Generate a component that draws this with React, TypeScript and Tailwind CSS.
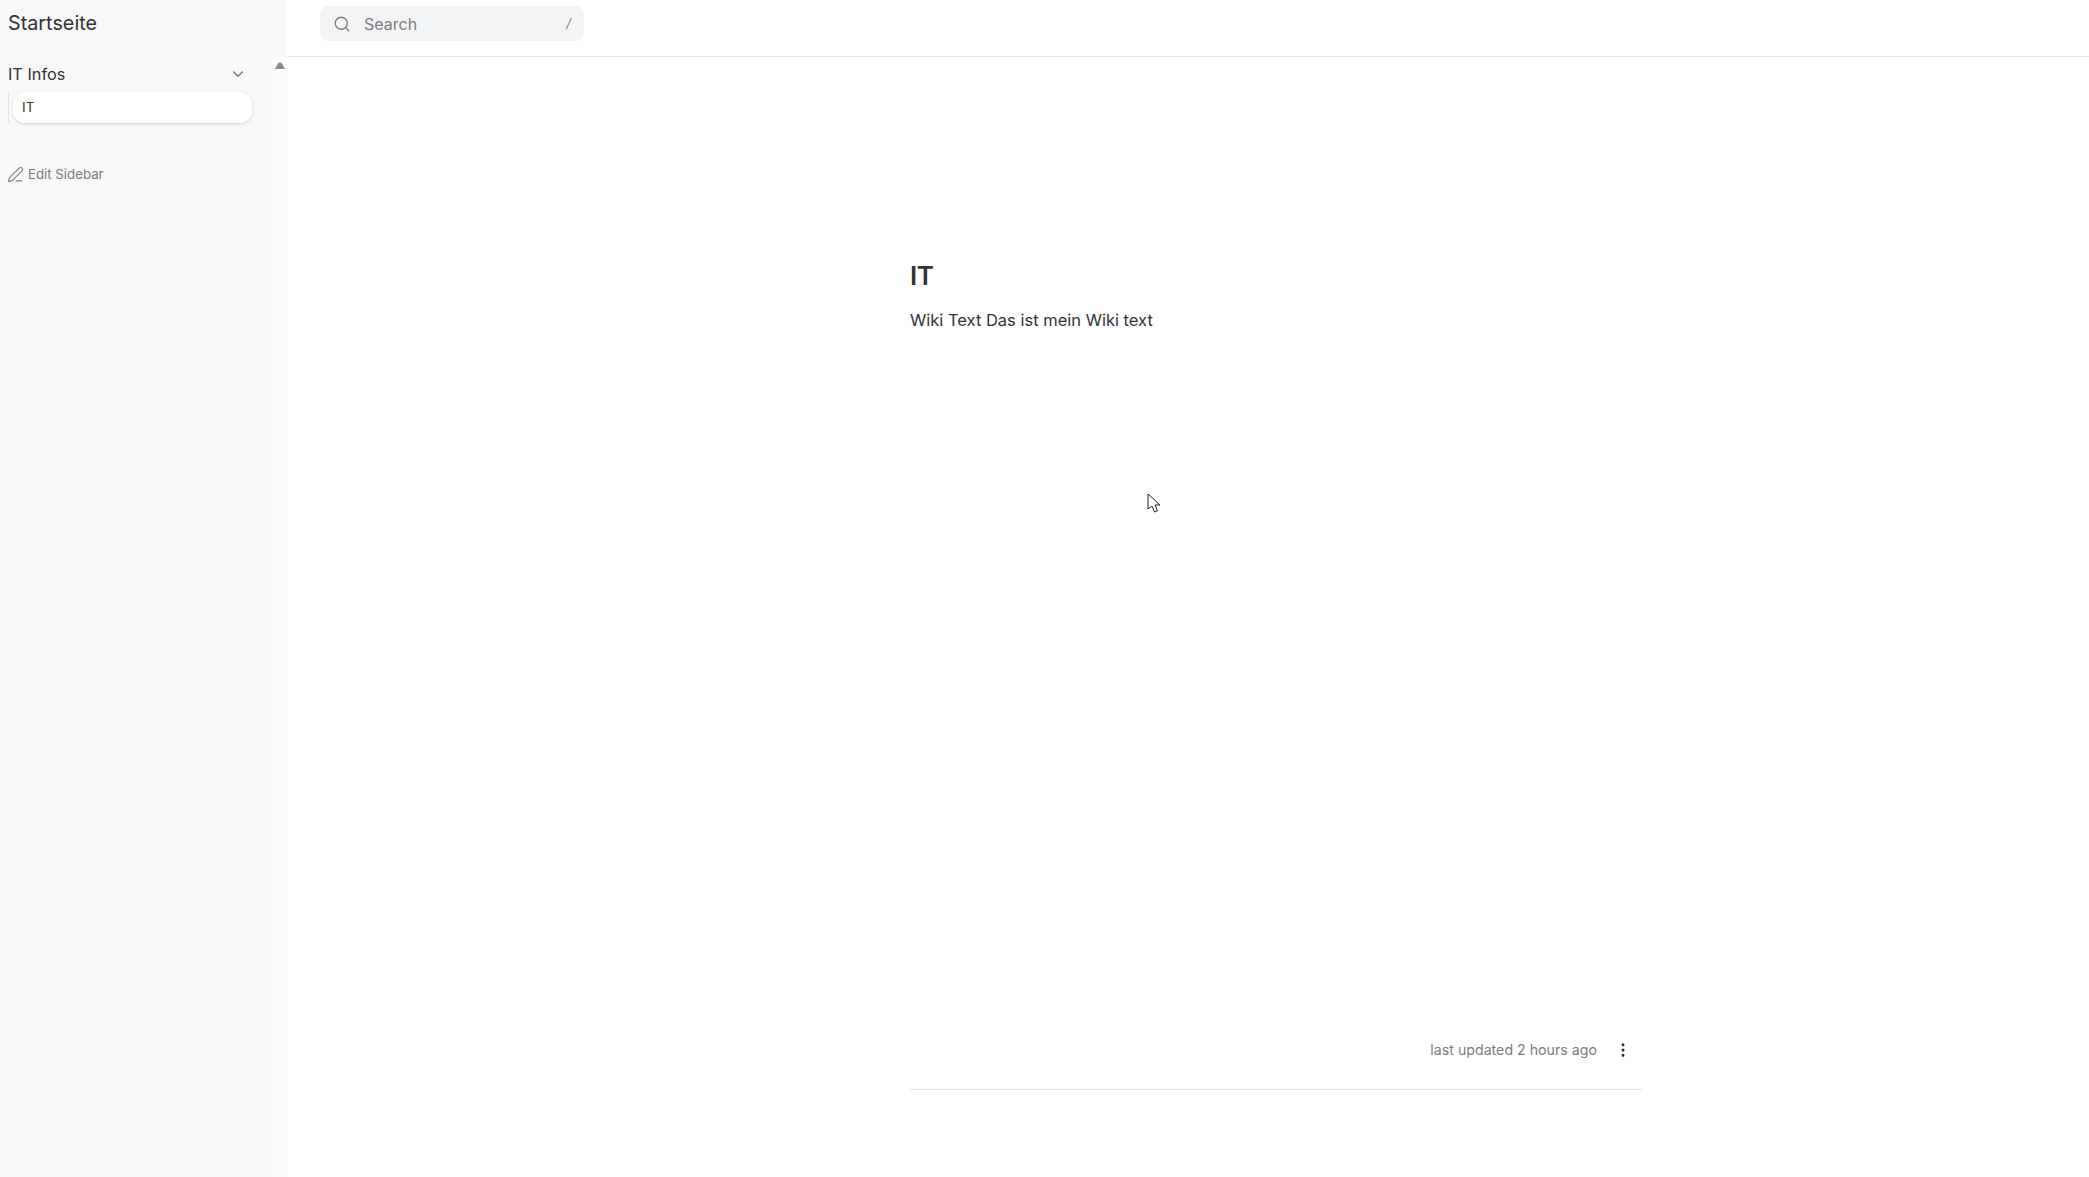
import { ChevronDown, EllipsisVertical, PenLine, Search } from 'lucide-react';

export default function App() {
  return (
    <div className="relative flex h-[1177px] overflow-hidden bg-white font-['Inter',sans-serif] text-[#333333]">
      <aside className="flex w-[287px] shrink-0 bg-[#f8f8f8]">
        <div className="w-[272px] shrink-0">
          <div className="flex h-[47px] items-center pl-2 text-[19.8px] leading-none">Startseite</div>
          <div className="mt-[16px] flex h-[22px] items-center justify-between pl-2 pr-[25px] text-[16.25px]">
            <span>IT Infos</span>
            <ChevronDown className="h-[18px] w-[18px] text-[#6b6b6b]" strokeWidth={1.5} />
          </div>
          <div className="mt-[7px] ml-2 border-l border-[#e2e2e2] pl-1">
            <div className="flex h-[31px] w-[239px] items-center rounded-xl bg-white pl-[9px] text-[13.5px] shadow-[0_1px_3px_rgba(0,0,0,0.15)]">IT</div>
          </div>
          <div className="mt-[42px] flex items-center gap-1 pl-[7px] text-[13.25px] text-[#7c7c7c]">
            <PenLine className="h-[17px] w-[17px]" strokeWidth={1.5} />
            <span>Edit Sidebar</span>
          </div>
        </div>
        <div className="mt-[57px] flex h-[1120px] w-[15px] justify-center bg-[#fbfbfb] pt-[5px]">
          <svg className="h-[7px] w-[10px]" viewBox="0 0 10 7" fill="#8a8a8a">
            <path d="M3.6 0.6h2.8L10 7H0z" />
          </svg>
        </div>
      </aside>

      <div className="flex min-w-0 flex-1 flex-col">
        <header className="flex h-[57px] shrink-0 items-start border-b border-[#e3e3e3] pl-[33px] pt-[6px]">
          <div className="flex h-[35px] w-[264px] items-center rounded-lg bg-[#f3f4f6] pl-[13px] pr-[13px] text-[16px] text-[#7d7d7d]">
            <Search className="h-[18px] w-[18px]" strokeWidth={1.75} />
            <span className="ml-[13px] flex-1">Search</span>
            <span className="text-[13px] italic">/</span>
          </div>
        </header>

        <main className="ml-[623px] w-[732px] flex-1">
          <h1 className="mt-[203px] text-[26px] font-semibold leading-8 tracking-[-0.5px]">IT</h1>
          <p className="mt-[16px] text-[16.5px] leading-6">Wiki Text Das ist mein Wiki text</p>
          <div className="mt-[705px] flex h-[26px] items-center justify-end pr-[10px] text-[14.2px] text-[#7c7c7c]">
            <span>last updated 2 hours ago</span>
            <EllipsisVertical className="ml-[17px] h-[18px] w-[18px] text-[#2c2c2c]" strokeWidth={2} />
          </div>
          <div className="mt-[26px] h-px bg-[#e3e3e3]" />
        </main>
      </div>

      <svg className="absolute left-[1147px] top-[493px] h-[21px] w-[14px]" viewBox="0 0 14 21" fill="white" stroke="#222" strokeWidth="1">
        <path d="M1 1v15l4-3 2.5 6 3-1.2-2.5-5.8h5z" />
      </svg>
    </div>
  );
}
